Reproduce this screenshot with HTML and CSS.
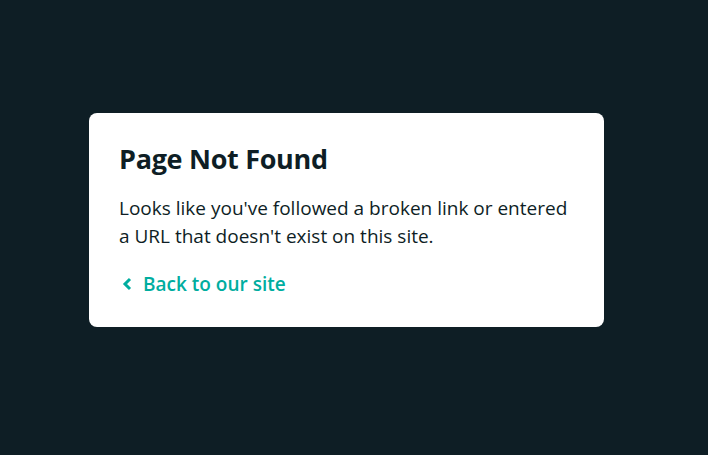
FILE: index.html
```html
<!DOCTYPE html>
<html lang="en">
<head>
    <meta charset="UTF-8">
    <meta name="viewport" content="width=device-width, initial-scale=1.0">
    <title>Page Not Found</title>
    <link rel="stylesheet" href="styles.css">
</head>
<body>
    <div class="page">
        <!-- 404 card -->
        <div class="card">
            <h1>Page Not Found</h1>
            <p>Looks like you've followed a broken link or entered a URL that doesn't exist on this site.</p>
            <a class="back-link" href="#">
                <svg width="10" height="14" viewBox="0 0 10 14">
                    <path d="M8 2 L3 7 L8 12" fill="none" stroke="currentColor" stroke-width="3"/>
                </svg>
                <span>Back to our site</span>
            </a>
        </div>
    </div>
</body>
</html>
```
FILE: styles.css
```css
* {
    font-family: 'Open Sans', 'Noto Sans', Arial, sans-serif;
}

body {
    margin: 0;
    background-color: #0e1e25;
    height: 100vh;
}

.page {
    padding: 113px 0 0 89px;
}

.card {
    background: white;
    width: 515px;
    box-sizing: border-box;
    padding: 29px 30px 29px;
    border-radius: 8px;
    color: #0e1e25;
}

h1 {
    font-size: 27px;
    font-weight: 700;
    margin: 0 0 18px 0;
    line-height: 34px;
    letter-spacing: -0.3px;
}

p {
    font-size: 19px;
    line-height: 28px;
    margin: 0 0 20px 0;
    letter-spacing: 0;
}

.back-link {
    display: inline-flex;
    align-items: center;
    gap: 11px;
    color: #00ad9f;
    text-decoration: none;
    font-size: 19px;
    font-weight: 600;
    line-height: 28px;
    padding-left: 3px;
    letter-spacing: 0;
}
```
